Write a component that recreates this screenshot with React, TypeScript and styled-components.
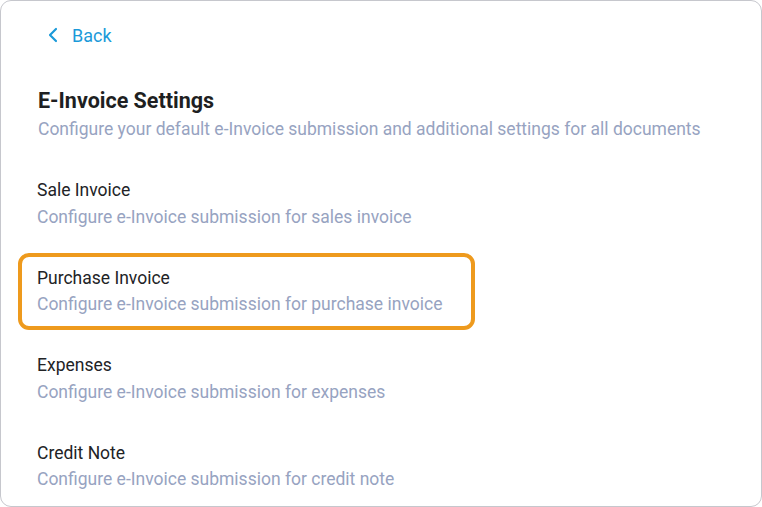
import * as React from 'react';
import styled, { createGlobalStyle } from 'styled-components';

interface Doc {
  name: string;
  desc: string;
}

const docs: Doc[] = [
  { name: 'Sale Invoice', desc: 'Configure e-Invoice submission for sales invoice' },
  { name: 'Purchase Invoice', desc: 'Configure e-Invoice submission for purchase invoice' },
  { name: 'Expenses', desc: 'Configure e-Invoice submission for expenses' },
  { name: 'Credit Note', desc: 'Configure e-Invoice submission for credit note' },
];

const ChevronLeft = () => (
  <svg width="24" height="24" viewBox="0 0 24 24" fill="none" stroke="currentColor" strokeWidth="2.2" strokeLinecap="round" strokeLinejoin="round">
    <path d="m15 18-6-6 6-6" />
  </svg>
);

export default function App() {
  const active = 1;
  return (
    <>
      <GlobalStyle />
      <Card>
        <BackLink href="#">
          <ChevronLeft />
          <span>Back</span>
        </BackLink>
        <Header>
          <Title>E-Invoice Settings</Title>
          <Subtitle>Configure your default e-Invoice submission and additional settings for all documents</Subtitle>
        </Header>
        <List>
          {docs.map((doc, index) => (
            <Item key={doc.name} $active={index === active}>
              <ItemName>{doc.name}</ItemName>
              <ItemDesc>{doc.desc}</ItemDesc>
            </Item>
          ))}
        </List>
      </Card>
    </>
  );
}

const GlobalStyle = createGlobalStyle`
  html, body {
    margin: 0;
    padding: 0;
    background: #ffffff;
  }
  body {
    font-family: Roboto, 'Liberation Sans', sans-serif;
  }
`;

const Card = styled.div`
  box-sizing: border-box;
  width: 762px;
  height: 507px;
  border: 1px solid #c6c7cd;
  border-radius: 11px;
  background: #fff;
  padding: 22px 17px 0;
  display: flex;
  flex-direction: column;
  overflow: hidden;
`;

const BackLink = styled.a`
  display: flex;
  align-items: center;
  gap: 7px;
  height: 24px;
  padding-left: 23px;
  color: #1b9ad9;
  font-size: 18px;
  text-decoration: none;
  align-self: flex-start;
`;

const Header = styled.div`
  margin-top: 40px;
  padding-left: 20px;
`;

const Title = styled.h1`
  margin: 0;
  font-size: 21.5px;
  line-height: 28px;
  font-weight: 700;
  color: #1e1f22;
`;

const Subtitle = styled.p`
  margin: 4px 0 0;
  font-size: 17.5px;
  line-height: 20px;
  color: #97a3c1;
`;

const List = styled.div`
  margin-top: 26px;
  display: flex;
  flex-direction: column;
  gap: 10.5px;
`;

const Item = styled.div<{ $active?: boolean }>`
  box-sizing: border-box;
  width: 457px;
  padding: 10px 15px 10.5px;
  border: 4px solid ${props => (props.$active ? '#ee9a1d' : 'transparent')};
  border-radius: 11px;
  cursor: pointer;
`;

const ItemName = styled.div`
  font-size: 17.5px;
  line-height: 22px;
  color: #222326;
`;

const ItemDesc = styled.div`
  margin-top: 4.5px;
  font-size: 17.5px;
  line-height: 22px;
  color: #97a3c1;
`;
